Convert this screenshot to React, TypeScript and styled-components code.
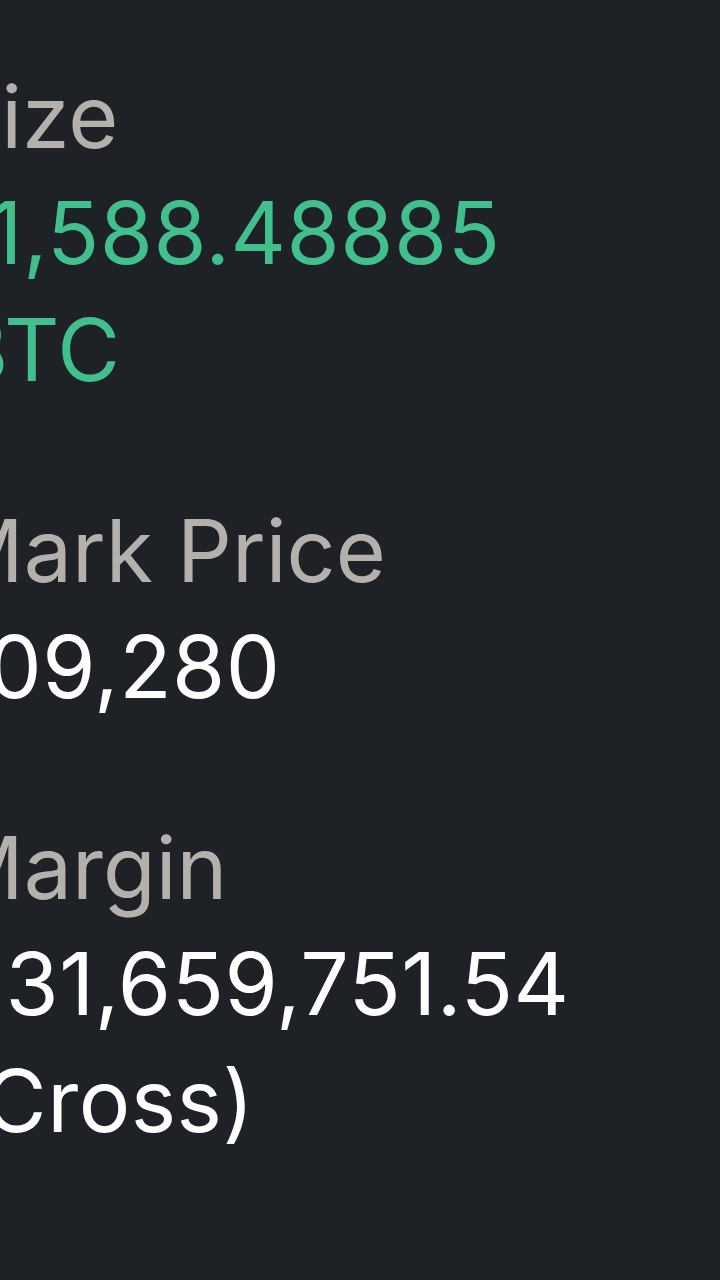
import React from "react";
import styled, { createGlobalStyle } from "styled-components";

const GlobalStyle = createGlobalStyle`
  html, body {
    margin: 0;
    padding: 0;
    background: #1e2226;
    overflow: hidden;
  }
`;

const Page = styled.div`
  width: 720px;
  height: 1280px;
  background: #1e2226;
  overflow: hidden;
  font-family: Inter, "Noto Sans", sans-serif;
`;

// the panel starts left of the viewport, so the first letters are cut off
const Column = styled.div`
  display: flex;
  flex-direction: column;
  gap: 84px;
  padding-top: 59px;
  margin-left: -54px;
  width: 700px;
`;

const Field = styled.div`
  display: flex;
  flex-direction: column;
`;

const Label = styled.div`
  font-size: 86px;
  line-height: 116px;
  color: #b4b1ac;
  white-space: nowrap;
`;

const Value = styled.div<{ $tone?: "green" | "white" }>`
  padding-left: 6px;
  font-size: 86px;
  line-height: 117px;
  letter-spacing: 0.5px;
  color: ${(p) => (p.$tone === "green" ? "#41bf8d" : "#ffffff")};
  width: 640px;
`;

const fields = [
  { label: "Size", value: "11,588.48885 BTC", tone: "green" as const },
  { label: "Mark Price", value: "109,280", tone: "white" as const },
  { label: "Margin", value: "331,659,751.54 (Cross)", tone: "white" as const },
];

export default function App() {
  return (
    <Page>
      <GlobalStyle />
      <Column>
        {fields.map((f) => (
          <Field key={f.label}>
            <Label>{f.label}</Label>
            <Value $tone={f.tone}>{f.value}</Value>
          </Field>
        ))}
      </Column>
    </Page>
  );
}
